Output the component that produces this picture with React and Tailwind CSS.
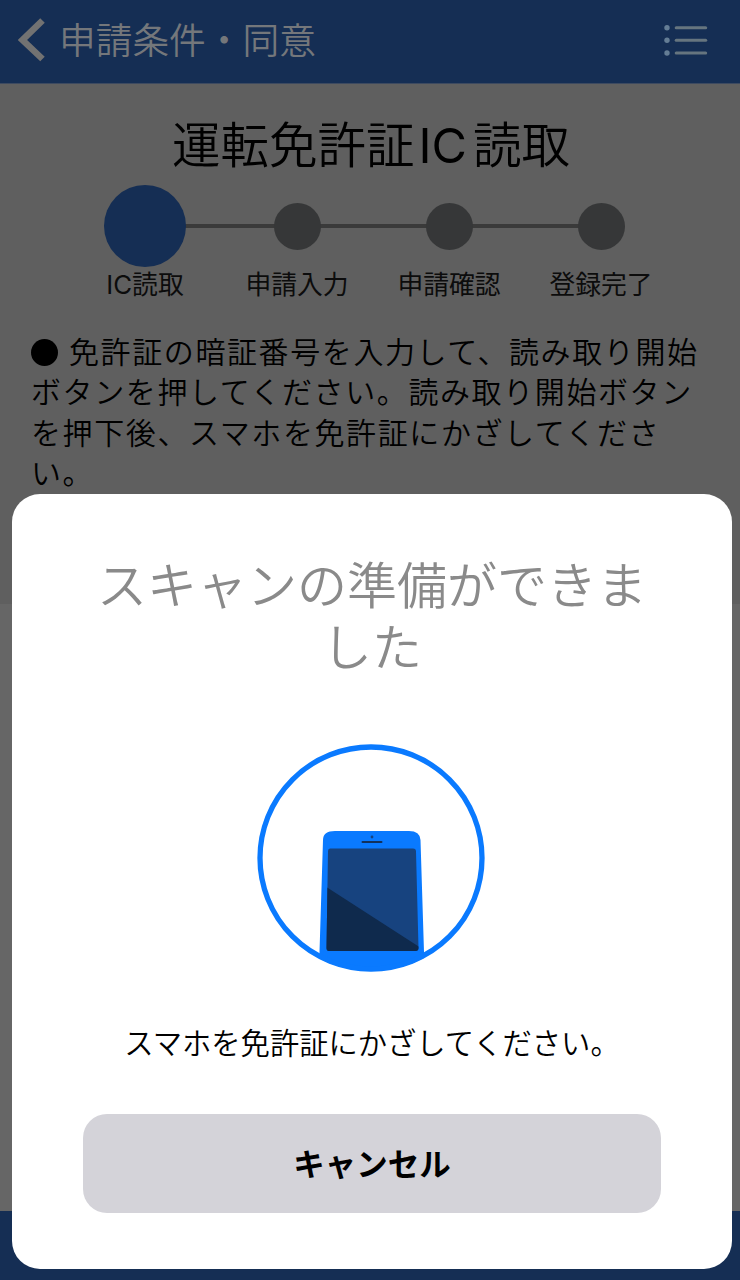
const steps = [
  { label: 'IC読取', active: true },
  { label: '申請入力' },
  { label: '申請確認' },
  { label: '登録完了' },
]

const guideLines = [
  '免許証の暗証番号を入力して、読み取り開始',
  'ボタンを押してください。読み取り開始ボタン',
  'を押下後、スマホを免許証にかざしてくださ',
  'い。',
]

function Header() {
  return (
    <header className="flex h-[84px] items-start justify-between border-b border-[#3d4a60] bg-[#152e54] pl-[18px] pr-8">
      <button className="flex items-start">
        <svg className="mt-[18px] h-[44px] w-[28px]" viewBox="0 0 28 44" fill="none">
          <path d="M24.5 2.5L4.5 22L24.5 41" stroke="#727272" strokeWidth="6.5" />
        </svg>
        <span className="ml-[13px] mt-[15px] text-[36.7px] font-[350] leading-[52px] text-[#74777b]">
          申請条件・同意
        </span>
      </button>
      <svg className="mt-6 h-[32px] w-[44px]" viewBox="0 0 44 32" fill="#66757f">
        {[3.7, 16.3, 29].map(y => (
          <g key={y}>
            <circle cx="3" cy={y} r="2.7" fill="#647d95" />
            <rect x="10.7" y={y - 1.5} width="32.5" height="3" rx="1.5" />
          </g>
        ))}
      </svg>
    </header>
  )
}

function Steps() {
  return (
    <div className="relative mx-[69px] mt-[5px] h-[120px]">
      <div className="absolute left-[77px] top-[40px] h-[4px] w-[455px] bg-[#3a3a3a]" />
      <div className="relative flex">
        {steps.map(step => (
          <div key={step.label} className="flex w-[152px] shrink-0 flex-col items-center">
            <div className="flex h-[84px] items-center">
              {step.active ? (
                <div className="size-[82px] rounded-full bg-[#152e54]" />
              ) : (
                <div className="size-[47px] rounded-full bg-[#363738]" />
              )}
            </div>
            <span className="text-[25.8px] leading-[34px] text-[#0c0c0c]">{step.label}</span>
          </div>
        ))}
      </div>
    </div>
  )
}

function PhoneIcon() {
  return (
    <svg className="h-[228px] w-[228px]" viewBox="0 0 228 228" fill="none">
      <defs>
        <clipPath id="ring">
          <circle cx="114" cy="114" r="113" />
        </clipPath>
        <clipPath id="screen">
          <path d="M73 104.5H156Q159 104.5 159 107.5L161.500 204Q161.500 207 158.500 207H72Q69.500 207 69.500 204L71 107Q71 104.500 73 104.500Z" />
        </clipPath>
      </defs>
      <path
        d="M66 96Q66 87 78 87H152Q163 87 163.5 96L167 208V228H62.5V208Z"
        fill="#0a7aff"
        clipPath="url(#ring)"
      />
      <g clipPath="url(#screen)">
        <rect x="60" y="100" width="110" height="112" fill="#17437f" />
        <path d="M60 137L170 208V212H60Z" fill="#0f2a4d" />
      </g>
      <circle cx="115" cy="93" r="1.4" fill="#17437f" />
      <rect x="104.5" y="97" width="21" height="2" rx="1" fill="#12315c" />
      <circle cx="114" cy="114" r="111" stroke="#0a7aff" strokeWidth="5.3" />
    </svg>
  )
}

function ScanSheet() {
  return (
    <div className="absolute left-[12px] top-[494px] flex h-[775px] w-[720px] flex-col items-center rounded-[28px] bg-white text-center">
      <h2 className="pt-[61px] text-[50px] font-[350] leading-[62px] text-[#8a8a8a]">
        スキャンの準備ができま
        <br />
        した
      </h2>
      <div className="mr-[2px] mt-[65px]">
        <PhoneIcon />
      </div>
      <p className="mt-[50px] text-[29.3px] font-[350] leading-[44px] text-black">
        スマホを免許証にかざしてください。
      </p>
      <button className="mt-[48px] h-[99px] w-[578px] rounded-[24px] bg-[#d4d3d9] pt-[2px] text-[31.5px] font-bold text-black">
        キャンセル
      </button>
    </div>
  )
}

export default function App() {
  return (
    <div className="relative flex h-[1280px] w-[740px] flex-col overflow-hidden bg-[#666666] font-['Inter','Noto_Sans_CJK_JP',sans-serif]">
      <Header />
      <main className="h-[520px] bg-[#5f5f5f]">
        <h1 className="pl-[2px] pt-[29px] text-center text-[48.5px] font-[350] leading-[66px] text-black">
          運転免許証<span className="ml-[4px] mr-[6px] font-normal">IC</span>読取
        </h1>
        <Steps />
        <div className="ml-[31px] mt-[28px] whitespace-nowrap text-[30px] font-[350] leading-[40.3px] tracking-[1.6px] text-black">
          {guideLines.map((line, i) => (
            <p key={line} className="flex items-center">
              {i === 0 && <span className="mr-[11px] size-[27px] rounded-full bg-black" />}
              {line}
            </p>
          ))}
        </div>
      </main>
      <footer className="mt-auto h-[69px] bg-[#152e54]" />
      <ScanSheet />
    </div>
  )
}
